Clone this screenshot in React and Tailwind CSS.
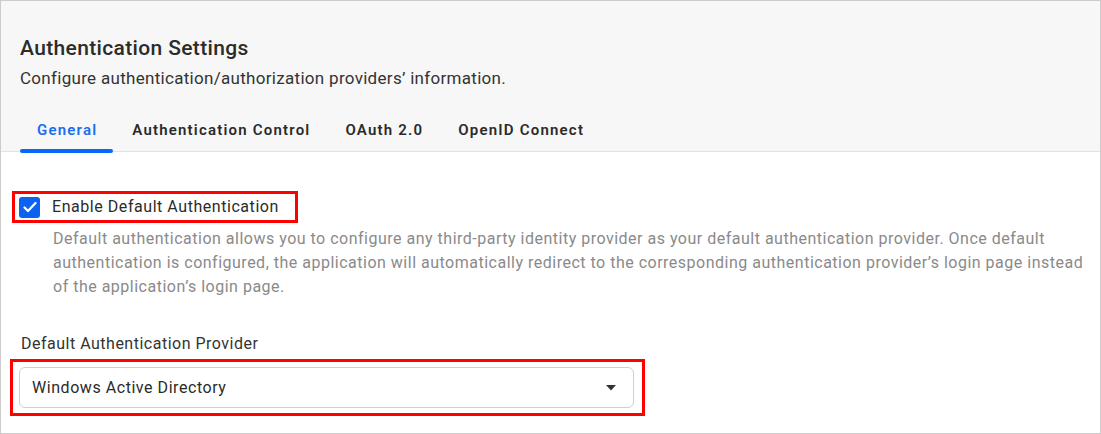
export default function App() {
  const tabs = ["General", "Authentication Control", "OAuth 2.0", "OpenID Connect"];
  return (
    <div className="w-[1101px] h-[434px] bg-white border border-[#cccccc] box-border overflow-hidden" style={{ fontFamily: "Roboto, 'Noto Sans', sans-serif" }}>
      <div className="bg-[#f7f7f7] border-b border-[#e2e2e2] pt-[33px] px-[19px]">
        <h1 className="text-[21px] leading-[28px] font-medium text-[#2b2b2b] tracking-[0.35px]">Authentication Settings</h1>
        <p className="text-[17px] leading-[24px] text-[#333333] mt-[4px] tracking-[0.3px]">Configure authentication/authorization providers’ information.</p>
        <div className="flex gap-[2px] mt-[25px]">
          {tabs.map((t, i) => (
            <div key={t} className="relative flex pl-[17px] pr-[16px] pt-[5px] pb-[11px]">
              <span className={`block text-[15px] leading-[20px] font-semibold tracking-[1.2px] ${i === 0 ? "text-[#1a6cf2]" : "text-[#2b2b2b]"}`}>{t}</span>
              {i === 0 && <div className="absolute left-0 right-0 -bottom-[2px] h-[4px] rounded-full bg-[#0a66ff]" />}
            </div>
          ))}
        </div>
      </div>
      <div className="px-[11px] pt-[39px]">
        <div className="inline-flex items-center gap-[12px] border-[3px] border-[#ff0000] pl-[4px] pr-[16px] h-[32px]">
          <div className="w-[21px] h-[21px] rounded-[3px] bg-[#0d63f0] flex items-center justify-center">
            <svg width="14" height="12" viewBox="0 0 14 12" fill="none">
              <path d="M1.5 6.5 L5 10 L12.5 2" stroke="white" strokeWidth="2.2" strokeLinecap="round" strokeLinejoin="round" />
            </svg>
          </div>
          <span className="text-[16px] text-[#2b2b2b] tracking-[0.55px]">Enable Default Authentication</span>
        </div>
        <p className="ml-[41px] w-[1040px] mt-[4px] text-[16px] leading-[24px] text-[#8a8a8a] tracking-[0.5px]">
          Default authentication allows you to configure any third-party identity provider as your default authentication provider. Once default authentication is configured, the application will automatically redirect to the corresponding authentication provider’s login page instead of the application’s login page.
        </p>
        <div className="mt-[35px] pl-[9px] text-[16px] leading-[20px] text-[#333333] tracking-[0.5px]">Default Authentication Provider</div>
        <div className="mt-[5px] -ml-[2px] w-[635px] border-[3px] border-[#ff0000] pt-[5px] pb-[5px] pl-[6px] pr-[8px]">
          <div className="h-[41px] border border-[#cfcfcf] rounded-[6px] flex items-center justify-between pl-[12px] pr-[17px]">
            <span className="text-[16px] text-[#2b2b2b] tracking-[0.55px]">Windows Active Directory</span>
            <svg width="10" height="6" viewBox="0 0 10 6"><path d="M0 0 L10 0 L5 5.5 Z" fill="#333" /></svg>
          </div>
        </div>
      </div>
    </div>
  );
}
